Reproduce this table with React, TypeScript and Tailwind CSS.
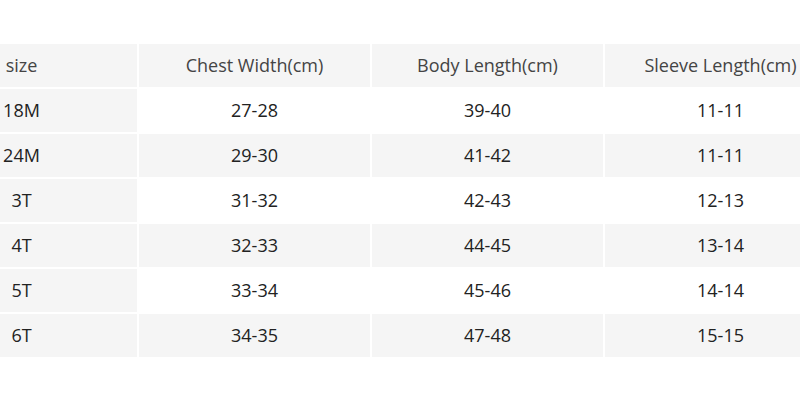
const header = ['size', 'Chest Width(cm)', 'Body Length(cm)', 'Sleeve Length(cm)']

const rows = [
  ['18M', '27-28', '39-40', '11-11'],
  ['24M', '29-30', '41-42', '11-11'],
  ['3T', '31-32', '42-43', '12-13'],
  ['4T', '32-33', '44-45', '13-14'],
  ['5T', '33-34', '45-46', '14-14'],
  ['6T', '34-35', '47-48', '15-15'],
]

export default function App() {
  return (
    <div
      className="w-[800px] h-[401px] bg-white overflow-hidden pt-[44px]"
      style={{ fontFamily: '"Open Sans", "Liberation Sans", sans-serif' }}
    >
      <div className="-ml-[94px] w-[930px] grid grid-cols-[231px_231px_231px_231px] gap-[2px] text-[18px]">
        {header.map(h => (
          <div key={h} className="h-[43px] bg-[#f5f5f5] flex items-center justify-center text-[#444]">
            {h}
          </div>
        ))}
        {rows.map((row, i) =>
          row.map((cell, j) => (
            <div
              key={`${i}-${j}`}
              className={
                j === 0 || i % 2 === 1
                  ? 'h-[43px] bg-[#f5f5f5] flex items-center justify-center text-[#222]'
                  : 'h-[43px] bg-white flex items-center justify-center text-[#222]'
              }
            >
              {cell}
            </div>
          ))
        )}
      </div>
    </div>
  )
}
